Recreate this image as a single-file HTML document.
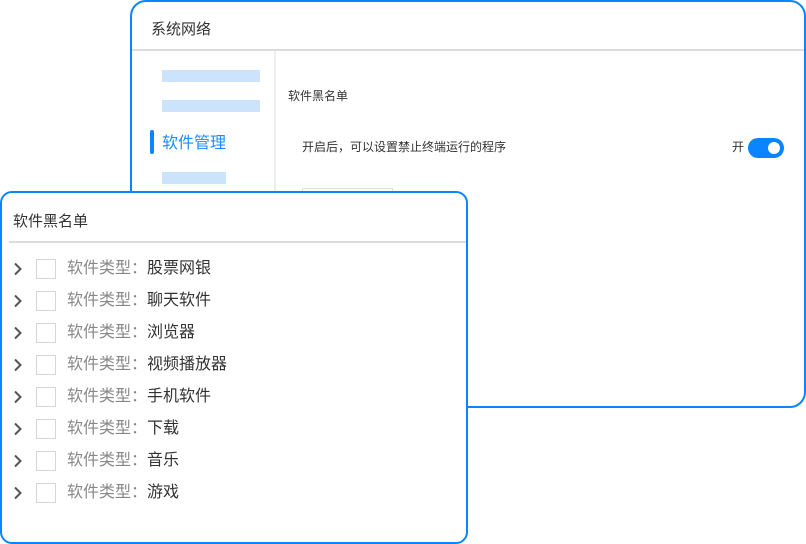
<!DOCTYPE html>
<html><head><meta charset="utf-8"><style>
body{margin:0;width:806px;height:544px;background:#fff;position:relative;overflow:hidden;font-family:"Liberation Sans","Noto Sans CJK SC",sans-serif;}
.win{position:absolute;background:#fff;border:2px solid #0a84ff;box-sizing:border-box;}
.bar{position:absolute;background:#cce4fb;height:12px;}
.t{position:absolute;white-space:nowrap;line-height:1;}
.row{position:absolute;left:0;height:20px;width:420px;}
.row svg{position:absolute;left:10px;top:3px;}
.cb{position:absolute;left:34px;top:0;width:20px;height:20px;border:1.5px solid #d6d6d6;box-sizing:border-box;}
.row span{position:absolute;left:65px;top:1px;font-size:16px;line-height:18px;color:#888;}
.row b{font-weight:normal;color:#333;}
</style></head><body>
<div class="win" style="left:130px;top:0;width:676px;height:408px;border-radius:16px;">
 <div class="t" style="left:19px;top:20px;font-size:15px;color:#333;">系统网络</div>
 <div style="position:absolute;left:0;right:0;top:47px;height:2px;background:#dcdcdc;"></div>
 <div style="position:absolute;left:142px;top:49px;width:2px;bottom:0;background:#eee;"></div>
 <div class="bar" style="left:30px;top:68px;width:98px;"></div>
 <div class="bar" style="left:30px;top:98px;width:98px;"></div>
 <div style="position:absolute;left:18px;top:128px;width:4px;height:24px;border-radius:2px;background:#0a84ff;"></div>
 <div class="t" style="left:30px;top:134px;font-size:16px;color:#1a8cff;">软件管理</div>
 <div class="bar" style="left:30px;top:170px;width:64px;"></div>
 <div class="t" style="left:156px;top:88px;font-size:12px;color:#333;">软件黑名单</div>
 <div class="t" style="left:170px;top:139px;font-size:12px;color:#333;">开启后，可以设置禁止终端运行的程序</div>
 <div class="t" style="left:600px;top:139px;font-size:12px;color:#333;">开</div>
 <div style="position:absolute;left:616px;top:136px;width:36px;height:20px;border-radius:10px;background:#0a84ff;"><div style="position:absolute;right:4px;top:4px;width:12px;height:12px;border-radius:6px;background:#fff;"></div></div>
 <div style="position:absolute;left:170px;top:186px;width:89px;height:20px;border:1.5px solid #ddd;"></div>
</div>
<div class="win" style="left:0;top:191px;width:468px;height:353px;border-radius:12px;">
 <div class="t" style="left:11px;top:21px;font-size:15px;color:#333;">软件黑名单</div>
 <div style="position:absolute;left:7px;right:0;top:48px;height:2px;background:#dcdcdc;"></div>
 <div style="position:absolute;left:0;top:66px;">
 <div class="row" style="top:0"><svg width="12" height="14"><path d="M3 1.5l5.5 5.5L3 12.5" stroke="#555" stroke-width="2" fill="none"/></svg><div class="cb"></div><span>软件类型：<b>股票网银</b></span></div>
 <div class="row" style="top:32px"><svg width="12" height="14"><path d="M3 1.5l5.5 5.5L3 12.5" stroke="#555" stroke-width="2" fill="none"/></svg><div class="cb"></div><span>软件类型：<b>聊天软件</b></span></div>
 <div class="row" style="top:64px"><svg width="12" height="14"><path d="M3 1.5l5.5 5.5L3 12.5" stroke="#555" stroke-width="2" fill="none"/></svg><div class="cb"></div><span>软件类型：<b>浏览器</b></span></div>
 <div class="row" style="top:96px"><svg width="12" height="14"><path d="M3 1.5l5.5 5.5L3 12.5" stroke="#555" stroke-width="2" fill="none"/></svg><div class="cb"></div><span>软件类型：<b>视频播放器</b></span></div>
 <div class="row" style="top:128px"><svg width="12" height="14"><path d="M3 1.5l5.5 5.5L3 12.5" stroke="#555" stroke-width="2" fill="none"/></svg><div class="cb"></div><span>软件类型：<b>手机软件</b></span></div>
 <div class="row" style="top:160px"><svg width="12" height="14"><path d="M3 1.5l5.5 5.5L3 12.5" stroke="#555" stroke-width="2" fill="none"/></svg><div class="cb"></div><span>软件类型：<b>下载</b></span></div>
 <div class="row" style="top:192px"><svg width="12" height="14"><path d="M3 1.5l5.5 5.5L3 12.5" stroke="#555" stroke-width="2" fill="none"/></svg><div class="cb"></div><span>软件类型：<b>音乐</b></span></div>
 <div class="row" style="top:224px"><svg width="12" height="14"><path d="M3 1.5l5.5 5.5L3 12.5" stroke="#555" stroke-width="2" fill="none"/></svg><div class="cb"></div><span>软件类型：<b>游戏</b></span></div>
 </div>
</div>
</body></html>
